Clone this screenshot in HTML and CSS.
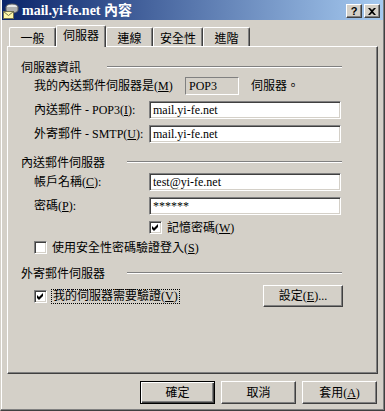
FILE: index.html
```html
<!DOCTYPE html>
<html lang="zh-Hant">
<head>
  <meta charset="UTF-8">
  <title>mail.yi-fe.net 內容</title>
  <link rel="stylesheet" href="styles.css">
</head>
<body>

<div class="window">
  <div class="titlebar">
    <svg class="app-icon" width="16" height="16" viewBox="0 0 16 16">
      <ellipse cx="9" cy="4" rx="6" ry="3" fill="#e8e8e8" stroke="#606060"/>
      <path d="M3 4v3c0 1.6 2.7 3 6 3s6-1.4 6-3V4" fill="#b0b0b0" stroke="#606060"/>
      <rect x="0.5" y="8.5" width="10" height="7" fill="#fff7a8" stroke="#707050"/>
      <path d="M0.5 8.5l5 4 5-4" fill="none" stroke="#707050"/>
    </svg>
    <span class="title-text">mail.yi-fe.net 內容</span>
    <div class="title-buttons">
      <span class="tbtn tbtn-help">?</span>
      <span class="tbtn">
        <svg width="8" height="7" viewBox="0 0 8 7"><path d="M0 0h2l2 2 2-2h2L5 3.5 8 7H6L4 5 2 7H0l3-3.5z" fill="#000"/></svg>
      </span>
    </div>
  </div>

  <div class="body">
    <div class="tabs">
      <span class="tab">一般</span>
      <span class="tab tab-active">伺服器</span>
      <span class="tab">連線</span>
      <span class="tab">安全性</span>
      <span class="tab">進階</span>
    </div>

    <div class="panel">
      <div class="group-head">
        <span class="gh-label gh-short">伺服器資訊</span>
        <span class="gh-line"></span>
      </div>
      <div class="row row-first">
        <span class="label label-wide">我的內送郵件伺服器是(<u>M</u>)</span>
        <span class="readonly-box">POP3</span>
        <span class="after-text">伺服器。</span>
      </div>
      <div class="row">
        <span class="label">內送郵件 - POP3(<u>I</u>):</span>
        <span class="field">mail.yi-fe.net</span>
      </div>
      <div class="row">
        <span class="label">外寄郵件 - SMTP(<u>U</u>):</span>
        <span class="field">mail.yi-fe.net</span>
      </div>

      <div class="group-head group-next">
        <span class="gh-label gh-long">內送郵件伺服器</span>
        <span class="gh-line"></span>
      </div>
      <div class="row row-after-head">
        <span class="label">帳戶名稱(<u>C</u>):</span>
        <span class="field">test@yi-fe.net</span>
      </div>
      <div class="row">
        <span class="label">密碼(<u>P</u>):</span>
        <span class="field">******</span>
      </div>
      <div class="row row-check">
        <span class="check check-indent">
          <svg width="9" height="9" viewBox="0 0 9 9"><path d="M1 3l2 2 4-4v3l-4 4-2-2z" fill="#000"/></svg>
        </span>
        <span class="check-text">記憶密碼(<u>W</u>)</span>
      </div>
      <div class="row row-check row-check2">
        <span class="check"></span>
        <span class="check-text">使用安全性密碼驗證登入(<u>S</u>)</span>
      </div>

      <div class="group-head group-next">
        <span class="gh-label gh-long">外寄郵件伺服器</span>
        <span class="gh-line"></span>
      </div>
      <div class="row row-auth">
        <span class="check">
          <svg width="9" height="9" viewBox="0 0 9 9"><path d="M1 3l2 2 4-4v3l-4 4-2-2z" fill="#000"/></svg>
        </span>
        <span class="check-text focus">我的伺服器需要驗證(<u>V</u>)</span>
        <span class="btn btn-settings">設定(<u>E</u>)...</span>
      </div>
    </div>

    <div class="actions">
      <span class="btn btn-default">確定</span>
      <span class="btn">取消</span>
      <span class="btn">套用(<u>A</u>)</span>
    </div>
  </div>
</div>

</body>
</html>
```

FILE: styles.css
```css
body {
  margin: 0;
  background: #d4d0c8;
  font-family: "Liberation Serif", "Noto Sans CJK TC", serif;
  font-size: 12px;
  color: #000;
}
.window {
  width: 385px;
  height: 411px;
  box-sizing: border-box;
  background: #d4d0c8;
  border-left: 1px solid #d4d0c8;
  border-right: 1px solid #404040;
  border-bottom: 1px solid #404040;
  box-shadow: inset -1px -1px #808080, inset 1px 0 #fff;
  padding: 0 1px 0 1px;
}
.titlebar {
  height: 20px;
  box-sizing: border-box;
  padding: 2px 3px 0 1px;
  display: flex;
  align-items: center;
  background: linear-gradient(to right, #0a246a, #a6caf0);
  color: #fff;
}
.app-icon {
  margin-right: 3px;
}
.title-text {
  font-weight: bold;
  font-size: 14px;
  line-height: 16px;
}
.title-buttons {
  margin-left: auto;
  display: flex;
  gap: 2px;
}
.tbtn {
  width: 16px;
  height: 14px;
  box-sizing: border-box;
  background: #d4d0c8;
  border-top: 1px solid #fff;
  border-left: 1px solid #fff;
  border-right: 1px solid #404040;
  border-bottom: 1px solid #404040;
  box-shadow: inset -1px -1px #808080;
  display: flex;
  align-items: center;
  justify-content: center;
  color: #000;
}
.tbtn-help {
  font-family: "Liberation Sans", sans-serif;
  font-weight: bold;
  font-size: 11px;
  line-height: 12px;
}
.body {
  padding: 0 5px;
}
.tabs {
  display: flex;
  align-items: flex-end;
  height: 21px;
  padding: 5px 0 0 2px;
}
.tab {
  min-width: 47px;
  height: 19px;
  box-sizing: border-box;
  padding: 2px 6px 0;
  text-align: center;
  line-height: 16px;
  font-family: "Noto Sans CJK TC", sans-serif;
  background: #d4d0c8;
  border-top: 1px solid #fff;
  border-left: 1px solid #fff;
  border-right: 1px solid #404040;
  border-radius: 2px 2px 0 0;
  box-shadow: inset -1px 0 #808080;
}
.tab-active {
  height: 22px;
  min-width: 50px;
  margin-bottom: -1px;
  position: relative;
  z-index: 1;
  padding-top: 1px;
}
.panel {
  height: 328px;
  box-sizing: border-box;
  border-top: 1px solid #fff;
  border-left: 1px solid #fff;
  border-right: 1px solid #404040;
  border-bottom: 1px solid #404040;
  box-shadow: inset -1px -1px #808080;
  padding: 12px 34px 0 13px;
}
.group-head {
  display: flex;
  align-items: center;
  height: 16px;
  line-height: 16px;
  font-family: "Noto Sans CJK TC", sans-serif;
}
.group-next {
  margin-top: 11px;
}
.gh-short {
  width: 86px;
}
.gh-long {
  width: 106px;
}
.gh-line {
  flex: 1;
  height: 0;
  border-top: 1px solid #808080;
  border-bottom: 1px solid #fff;
  margin-right: 1px;
}
.row {
  display: flex;
  align-items: center;
  height: 18px;
  margin: 6px 0 0 13px;
  line-height: 16px;
}
.row-first {
  margin-top: 2px;
}
.row-after-head {
  margin-top: 3px;
}
.label {
  width: 115px;
  flex: none;
}
.label-wide {
  width: 151px;
}
.readonly-box {
  width: 54px;
  height: 18px;
  box-sizing: border-box;
  border: 1px solid;
  border-color: #808080 #fff #fff #808080;
  padding-left: 3px;
  line-height: 16px;
}
.after-text {
  margin-left: 12px;
}
.field {
  width: 192px;
  height: 18px;
  box-sizing: border-box;
  background: #fff;
  border: 1px solid;
  border-color: #808080 #fff #fff #808080;
  box-shadow: inset 1px 1px #404040, inset -1px -1px #d4d0c8;
  padding: 0 3px;
  line-height: 16px;
}
.row-check {
  height: 13px;
}
.row-check2 {
  margin-top: 7px;
}
.check {
  width: 13px;
  height: 13px;
  flex: none;
  box-sizing: border-box;
  background: #fff;
  border: 1px solid;
  border-color: #808080 #fff #fff #808080;
  box-shadow: inset 1px 1px #404040, inset -1px -1px #d4d0c8;
  display: flex;
  align-items: center;
  justify-content: center;
}
.check-indent {
  margin-left: 115px;
}
.check-text {
  margin-left: 5px;
}
.row-auth {
  height: 22px;
  margin-top: 4px;
}
.focus {
  border: 1px dotted #000;
  padding: 0 1px;
  line-height: 13px;
  margin-left: 4px;
}
.btn {
  width: 75px;
  height: 23px;
  box-sizing: border-box;
  display: flex;
  align-items: center;
  justify-content: center;
  background: #d4d0c8;
  border: 1px solid;
  border-color: #fff #404040 #404040 #fff;
  box-shadow: inset -1px -1px #808080;
  line-height: 16px;
}
.btn-settings {
  width: 80px;
  height: 22px;
  margin-left: auto;
}
.btn-default {
  border-color: #000;
  box-shadow: inset 1px 1px #fff, inset -1px -1px #404040, inset -2px -2px #808080;
}
.actions {
  display: flex;
  justify-content: flex-end;
  gap: 6px;
  margin: 7px 1px 0 0;
}
```
